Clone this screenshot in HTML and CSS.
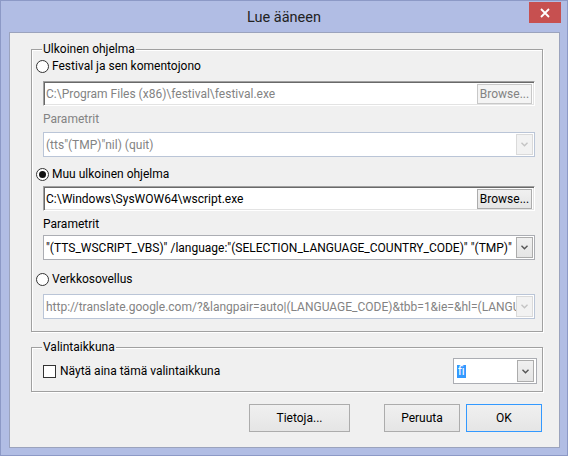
FILE: index.html
```html
<!DOCTYPE html>
<html lang="fi">
<head>
<meta charset="utf-8">
<title>Lue ääneen</title>
<link rel="stylesheet" href="styles.css">
</head>
<body>
<div class="window">
  <div class="titlebar"><span class="title">Lue ääneen</span></div>
  <div class="close"><svg width="10" height="10" viewBox="0 0 10 10"><path d="M1 1L9 9M9 1L1 9" stroke="#fff" stroke-width="1.8" fill="none"/></svg></div>
  <div class="client">
    <div class="group g1">
      <span class="legend">Ulkoinen ohjelma</span>
      <div class="opt"><span class="radio"></span><span>Festival ja sen komentojono</span></div>
      <div class="field off"><span class="val">C:\Program Files (x86)\festival\festival.exe</span><span class="browse off">Browse...</span></div>
      <div class="lbl off">Parametrit</div>
      <div class="combo off"><span class="val">(tts"(TMP)"nil) (quit)</span><span class="arrow"><svg width="7" height="5" viewBox="0 0 7 5"><path d="M0.5 0.8L3.5 3.8L6.5 0.8" fill="none" stroke-width="1.4"/></svg></span></div>
      <div class="opt o2"><span class="radio on"></span><span>Muu ulkoinen ohjelma</span></div>
      <div class="field f2"><span class="val">C:\Windows\SysWOW64\wscript.exe</span><span class="browse">Browse...</span></div>
      <div class="lbl l2">Parametrit</div>
      <div class="combo c2"><span class="val">"(TTS_WSCRIPT_VBS)" /language:"(SELECTION_LANGUAGE_COUNTRY_CODE)" "(TMP)"</span><span class="arrow"><svg width="7" height="5" viewBox="0 0 7 5"><path d="M0.5 0.8L3.5 3.8L6.5 0.8" fill="none" stroke-width="1.4"/></svg></span></div>
      <div class="opt o3"><span class="radio"></span><span>Verkkosovellus</span></div>
      <div class="combo off c3"><span class="val">http://translate.google.com/?&amp;langpair=auto|(LANGUAGE_CODE)&amp;tbb=1&amp;ie=&amp;hl=(LANGUAGE_CODE)</span><span class="arrow"><svg width="7" height="5" viewBox="0 0 7 5"><path d="M0.5 0.8L3.5 3.8L6.5 0.8" fill="none" stroke-width="1.4"/></svg></span></div>
    </div>
    <div class="group g2">
      <span class="legend">Valintaikkuna</span>
      <div class="row">
        <span class="check"></span><span class="chklabel">Näytä aina tämä valintaikkuna</span>
        <div class="combo fi"><span class="val"><span class="sel">fi</span></span><span class="arrow"><svg width="7" height="5" viewBox="0 0 7 5"><path d="M0.5 0.8L3.5 3.8L6.5 0.8" fill="none" stroke-width="1.4"/></svg></span></div>
      </div>
    </div>
    <div class="buttons">
      <span class="btn b-info">Tietoja...</span>
      <span class="btn b-cancel">Peruuta</span>
      <span class="btn b-ok">OK</span>
    </div>
  </div>
</div>
</body>
</html>
```

FILE: styles.css
```css
* { box-sizing: border-box; }
html, body { margin: 0; padding: 0; }
body {
  width: 568px; height: 457px; overflow: hidden;
  background: #fff;
  font-family: Roboto, "Open Sans", sans-serif;
  font-size: 12px; color: #000;
}
.window {
  position: relative;
  width: 568px; height: 456px;
  background: #b1bde4;
  border: 1px solid #8c99c6;
  display: flex; flex-direction: column;
}
.titlebar {
  height: 31px;
  display: flex; justify-content: center; align-items: center;
  padding-top: 2px;
}
.title { font-size: 14.5px; color: #222; }
.close {
  position: absolute; top: 1px; right: 6px;
  width: 32px; height: 21px;
  background: #c75050;
  display: flex; align-items: center; justify-content: center;
}
.client {
  margin-left: 8px;
  width: 551px; height: 416px;
  background: #f0f0f0;
  border: 1px solid #9ba3bd;
  padding: 16px 0 0 21px;
}
.group {
  position: relative;
  width: 512px;
  border: 1px solid #a0a0a0;
  box-shadow: inset 1px 1px 0 #fff, 1px 1px 0 #fff;
}
.legend {
  position: absolute; left: 10px; top: -9px;
  line-height: 16px; padding: 0 1px;
  background: #f0f0f0;
}
.g1 { height: 283px; padding: 8px 0 0 4px; }
.opt { height: 16px; display: flex; align-items: center; }
.radio {
  width: 13px; height: 13px; border-radius: 50%;
  border: 1px solid #333; background: #fff;
  margin-right: 3px; flex: none;
  display: flex; align-items: center; justify-content: center;
}
.radio.on::after {
  content: ""; width: 7px; height: 7px; border-radius: 50%; background: #111;
}
.o2 { margin-top: 9px; }
.o3 { margin-top: 11px; }
.field, .combo, .lbl { margin-left: 7px; }
.field {
  width: 492px; height: 25px; margin-top: 7px;
  background: #fff;
  border: 1px solid; border-color: #a0a0a0 #fff #fff #a0a0a0;
  box-shadow: inset 1px 1px 0 #696969, inset -1px -1px 0 #e3e3e3;
  display: flex; align-items: center;
  padding: 1px 2px 1px 2px;
}
.f2 { margin-top: 4px; }
.val { flex: 1; white-space: nowrap; overflow: hidden; line-height: 16px; }
.off .val, .lbl.off { color: #838383; }
.browse {
  width: 55px; height: 20px; margin-top: 1px;
  border: 1px solid #acacac;
  background: linear-gradient(#f0f0f0, #e5e5e5);
  display: flex; align-items: center; justify-content: center;
  flex: none;
}
.browse.off { border-color: #c8c8c8; background: #f4f4f4; color: #838383; }
.lbl { height: 16px; line-height: 16px; margin-top: 5px; }
.l2 { margin-top: 5px; }
.combo {
  width: 492px; height: 25px; margin-top: 5px;
  background: #fff; border: 1px solid #abadb3;
  padding: 1px 1px 1px 2px;
  display: flex; align-items: center;
}
.combo.off { border-color: #bac5d7; }
.c2 { margin-top: 3px; }
.c3 { margin-top: 7px; }
.arrow {
  width: 17px; height: 21px; flex: none;
  border: 1px solid #acacac;
  background: linear-gradient(#f0f0f0, #e5e5e5);
  display: flex; align-items: center; justify-content: center;
  stroke: #555;
}
.off .arrow { border-color: #dadada; background: #f2f2f2; stroke: #c4c4c4; }
.g2 { height: 45px; margin-top: 15px; padding: 10px 5px 0 11px; }
.row { height: 26px; display: flex; align-items: center; }
.check {
  width: 13px; height: 13px; border: 1px solid #333; background: #fff;
  margin-right: 4px; flex: none;
}
.chklabel { flex: 1; }
.combo.fi { width: 84px; height: 26px; margin: 0; padding: 1px 2px 1px 3px; }
.fi .arrow { height: 22px; }
.sel { background: #3399ff; color: #fff; padding: 0 1px; line-height: 13px; display: inline-block; }
.buttons {
  width: 512px; height: 28px; margin-top: 12px;
  display: flex; justify-content: flex-end; padding-right: 1px;
}
.btn {
  height: 28px; border: 1px solid #acacac;
  background: linear-gradient(#f0f0f0, #e5e5e5);
  display: flex; align-items: center; justify-content: center;
}
.b-info { width: 101px; margin-right: 34px; }
.b-cancel { width: 76px; margin-right: 6px; }
.b-ok { width: 76px; border-color: #3399ff; }
```
